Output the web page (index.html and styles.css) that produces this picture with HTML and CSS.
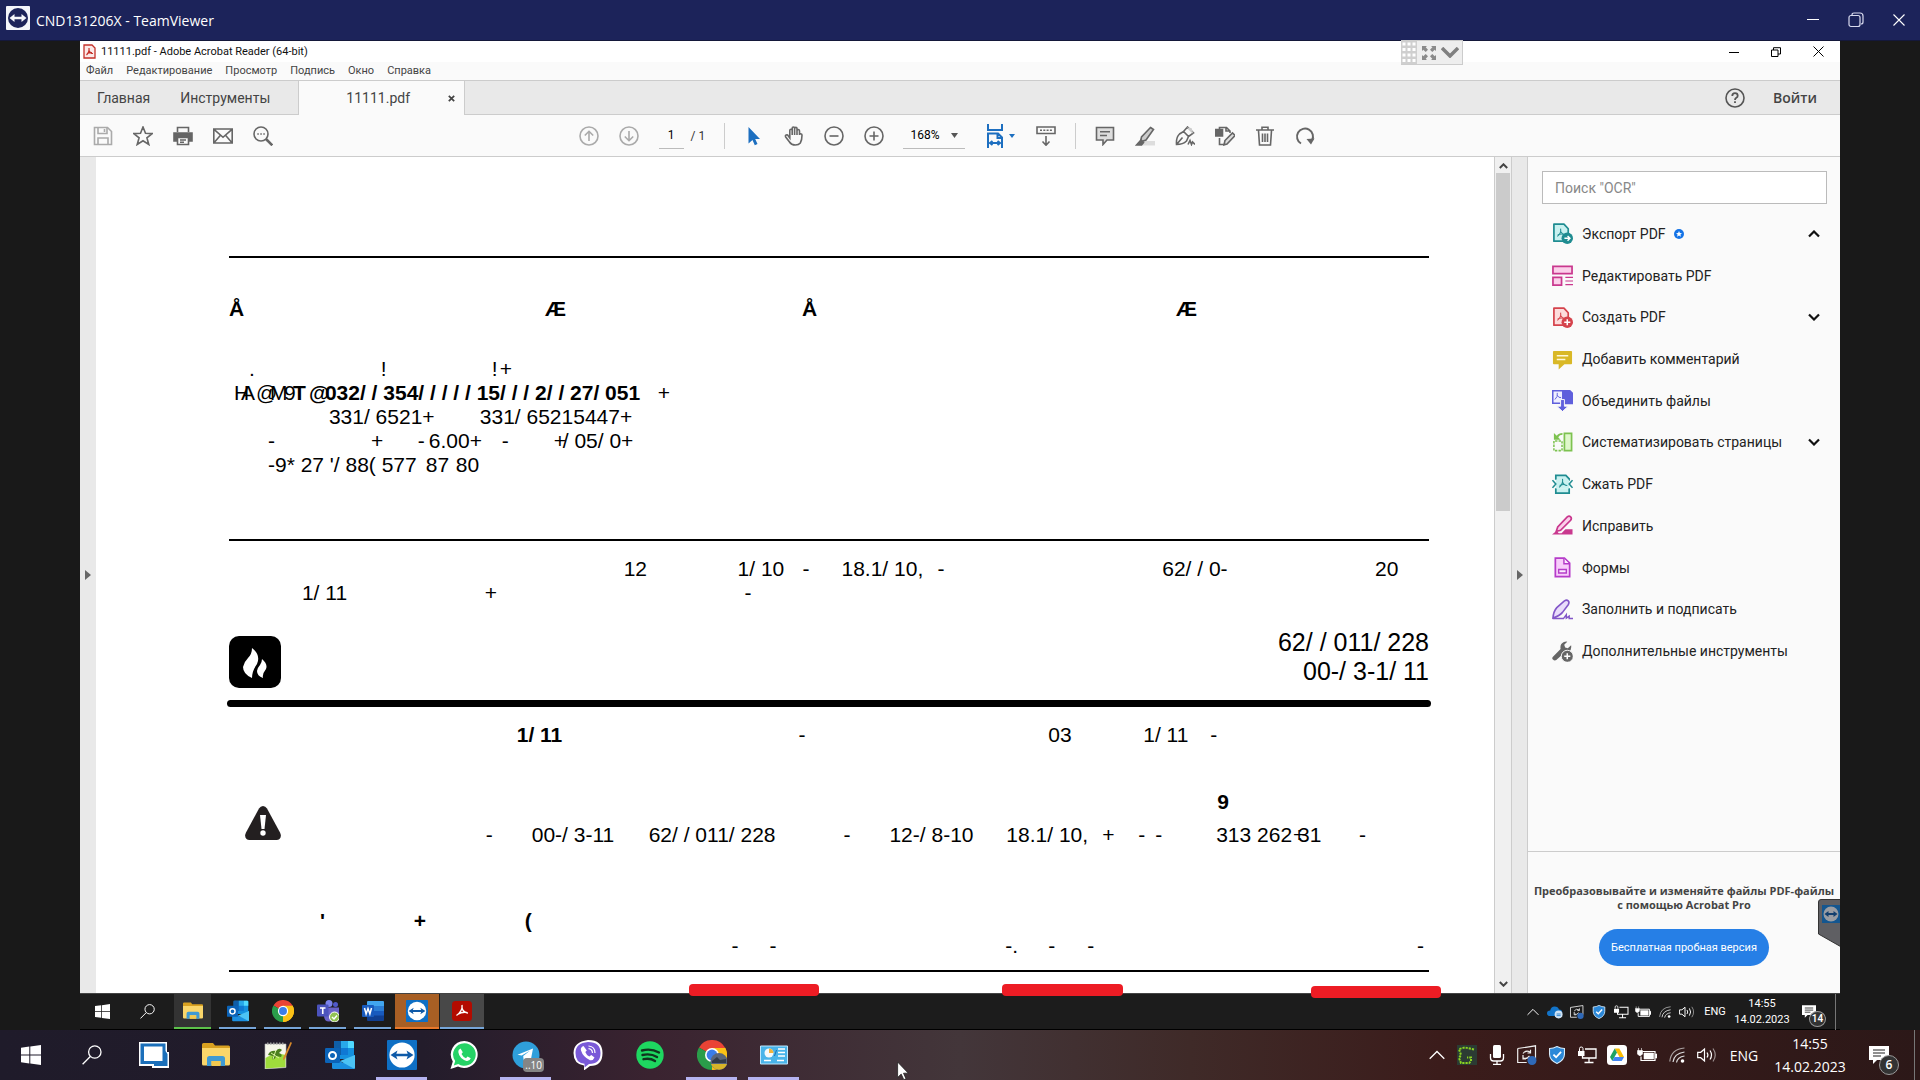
FILE: index.html
```html
<!DOCTYPE html>
<html lang="ru">
<head>
<meta charset="utf-8">
<meta name="viewport" content="width=device-width, initial-scale=1">
<title>CND131206X - TeamViewer</title>
<link rel="stylesheet" href="styles.css">
</head>
<body>

<!-- shared icons -->
<svg class="defs" aria-hidden="true">
  <symbol id="i-tv" viewBox="0 0 30 30">
    <rect width="30" height="30" rx="1" fill="#0e6fc4"/>
    <circle cx="15" cy="15" r="12.6" fill="#fff"/>
    <path d="M3.500 15l7-4.500-1.200 3.200h11.400L19.500 10.500l7 4.500-7 4.500 1.200-3.200H9.300l1.200 3.200z" fill="#0e5aa8"/>
  </symbol>
  <symbol id="i-win" viewBox="0 0 20 20">
    <path d="M0 2.800L8.300 1.600v7.900H0zM9.300 1.500L20 0v9.500H9.300zM0 10.500h8.300v7.900L0 17.200zM9.300 10.500H20V20L9.300 18.500z" fill="#fff"/>
  </symbol>
  <symbol id="i-find" viewBox="0 0 20 20">
    <g fill="none" stroke="#fff" stroke-width="1.300"><circle cx="12.800" cy="7" r="6.200"/><path d="M8.300 11.500L.6 19.300"/></g>
  </symbol>
  <symbol id="i-folder" viewBox="0 0 28 24">
    <path d="M0 1.500Q0 0 1.500 0H11l2 2.500h13.500Q28 2.500 28 4v4H0z" fill="#d9a120"/>
    <path d="M0 5h28v16q0 1.500-1.500 1.500h-25Q0 22.500 0 21z" fill="#fad66a"/>
    <path d="M5 23v-7.500Q5 13 7.500 13h13q2.500 0 2.500 2.500V23h-4.500v-5h-9v5z" fill="#3f9ad3"/>
    <path d="M9.500 18h9v5h-9z" fill="#f3c94f"/>
  </symbol>
  <symbol id="i-outlook" viewBox="0 0 30 28">
    <path d="M9 1.500Q9 0 10.500 0h17Q29 0 29 1.500V18H9z" fill="#1490df"/>
    <path d="M16 0h7v7h-7z" fill="#28a8ea"/><path d="M23 0h4.500Q29 0 29 1.500V7h-6z" fill="#50d9ff"/>
    <path d="M16 7h7v7h-7z" fill="#0f78d4"/><path d="M9 0h7v14H9z" fill="#0f5ea8"/>
    <path d="M7 15l11 7 12-8v12.500q0 1.500-1.500 1.500h-20Q7 28 7 26.500z" fill="#1a8fe0"/>
    <path d="M30 14v12.500q0 1-.8 1.300L15 20z" fill="#4cc3f5"/>
    <rect y="7" width="15" height="15" rx="1.200" fill="#0b63b8"/>
    <circle cx="7.500" cy="14.500" r="3.500" fill="none" stroke="#fff" stroke-width="2"/>
  </symbol>
  <symbol id="i-chrome" viewBox="0 0 30 30">
    <path d="M15 15L2 7.500A15 15 0 0 1 28 7.500z" fill="#ea4335"/>
    <path d="M15 15L28 7.500A15 15 0 0 1 15 30z" fill="#fbc116"/>
    <path d="M15 15v15A15 15 0 0 1 2 7.500z" fill="#2a9d4a"/>
    <path d="M15 8h13.200A15 15 0 0 1 15 30l6-11.500z" fill="#fbc116"/>
    <circle cx="15" cy="15" r="7" fill="#fff"/><circle cx="15" cy="15" r="5.400" fill="#3b7de9"/>
  </symbol>
  <symbol id="i-up" viewBox="0 0 16 9"><path d="M.7 8.300L8 1l7.300 7.300" fill="none" stroke="#fff" stroke-width="1.300"/></symbol>
  <symbol id="i-sync" viewBox="0 0 20 20">
    <path d="M.7 3.500L18.500.8v13M.7 3.500v14h9" fill="none" stroke="#eee" stroke-width="1.200"/>
    <path d="M6 8.500q3-4 7-1.500m.5-2.200V8h-3M6 10v4h3M6.500 13q3 1.500 6-2" fill="none" stroke="#eee" stroke-width="1.200"/>
    <circle cx="15" cy="15.500" r="4.500" fill="#2f69b8"/>
  </symbol>
  <symbol id="i-shield" viewBox="0 0 18 20">
    <path d="M9 .6q4 2.200 8.300 2.200V9q0 7-8.300 10.400Q.7 16 .7 9V2.800Q5 2.800 9 .6z" fill="#2b88d8" stroke="#d8ecfa" stroke-width="1.200"/>
    <path d="M5 9.500l3 3 5.500-6" fill="none" stroke="#fff" stroke-width="2"/>
  </symbol>
  <symbol id="i-net" viewBox="0 0 20 18">
    <path d="M8 3h11v9H5.500V9M12 12v4M7.500 16.500h9" fill="none" stroke="#fff" stroke-width="1.300"/>
    <path d="M1 5h6.500v5H1z" fill="#fff"/><path d="M2.500 5V2.500q0-1.500 1.700-1.500T6 2.500V5" fill="none" stroke="#fff"/>
  </symbol>
  <symbol id="i-bat" viewBox="0 0 20 14">
    <path d="M5.500 3.500H18v9H4v-4" fill="none" stroke="#fff" stroke-width="1.200"/>
    <path d="M7 5h9.500v6H7zM18.500 6H20v4h-1.500zM.5 2.500h5V6L4 7.500H2L.5 6zM1.500 0v3M4.500 0v3" fill="#fff" stroke="#fff" stroke-width=".6"/>
  </symbol>
  <symbol id="i-wifi" viewBox="0 0 16 16">
    <g fill="none" stroke="#ddd" stroke-width="1.200"><path d="M.8 14.500Q2 2 15.500 1" opacity=".7"/><path d="M4 15Q5 6.500 15.500 5"/><path d="M7.500 15.500Q8.500 10 15.500 9"/></g>
    <circle cx="13.500" cy="14" r="1.800" fill="#fff"/>
  </symbol>
  <symbol id="i-vol" viewBox="0 0 20 16">
    <g fill="none" stroke="#fff" stroke-width="1.200"><path d="M.7 5.300h3L7.500 2v12L3.700 10.700h-3z"/><path d="M10 5.500q1.800 2.500 0 5M13 3.500q3 4.500 0 9"/><path d="M16 1.500q4.500 6.500 0 13" opacity=".5"/></g>
  </symbol>
  <symbol id="i-note" viewBox="0 0 20 18">
    <path d="M0 0h20v14H8l-4 4v-4H0z" fill="#fff"/><path d="M4 4h12M4 7h12M4 10h8" stroke="#222" stroke-width="1.200"/>
  </symbol>
  <symbol id="i-page" viewBox="0 0 22 22">
    <path d="M2 1.200h10.500L17 6v13H2z" fill="var(--tint)" stroke="currentColor" stroke-width="1.800" stroke-linejoin="round"/>
    <path d="M9 6q1 5-3.500 8M9 9q2 3.500 5 3M6 12.500q3-1.500 6-.8" fill="none" stroke="currentColor" stroke-width="1.100"/>
  </symbol>
  <symbol id="i-chev" viewBox="0 0 12 8"><path d="M1 1.500l5 5 5-5" fill="none" stroke="#111" stroke-width="2.200"/></symbol>
</svg>

<header class="titlebar">
  <svg class="tv-logo" viewBox="0 0 24 24"><rect width="24" height="24" rx="1" fill="#f4f6fb"/><circle cx="12" cy="12" r="10" fill="#1c235a"/><path d="M3.500 12l5-4v2.700h7V8l5 4-5 4v-2.700h-7V16z" fill="#f4f6fb"/></svg>
  <h1>CND131206X - TeamViewer</h1>
  <div class="win-buttons">
    <button aria-label="Свернуть"><svg width="12" height="12"><path d="M0 5.500h12" stroke="#fff"/></svg></button>
    <button aria-label="Развернуть"><svg width="16" height="16" fill="none" stroke="#d8daee" stroke-width="1.200"><rect x="1" y="3.500" width="11" height="11" rx="2"/><path d="M4 3q0-2 2-2h6q3 0 3 3v6q0 2-2 2"/></svg></button>
    <button aria-label="Закрыть"><svg width="12" height="12"><path d="M.5.5l11 11M11.500.5l-11 11" stroke="#fff" stroke-width="1.100"/></svg></button>
  </div>
</header>

<main class="remote">
  <div class="tv-panel">
    <svg class="tv-grid" width="16" height="23" viewBox="0 0 16 23"><rect width="16" height="23" fill="#cfcfcf"/><path d="M3 0v23M8 0v23M13 0v23" stroke="#fff" stroke-width="3" stroke-dasharray="3 2.500" stroke-dashoffset="-1.500"/></svg>
    <svg width="14" height="14" fill="#8a8a8a"><path d="M0 0h5L3.700 1.300 6 3.700 3.700 6 1.300 3.700 0 5zM14 0v5l-1.300-1.300L10.300 6 8 3.700l2.400-2.400L9 0zM0 14V9l1.300 1.300L3.700 8 6 10.300l-2.300 2.400L5 14zM14 14H9l1.300-1.300L8 10.300 10.300 8l2.400 2.300L14 9z"/></svg>
    <svg width="18" height="11"><path d="M1 1l8 8 8-8" fill="none" stroke="#808080" stroke-width="3.500"/></svg>
  </div>

  <div class="app-title">
    <svg width="13" height="15" viewBox="0 0 13 15"><path d="M1 1h8l3 3v10H1z" fill="#fbe9e8" stroke="#c4312a" stroke-width="1.300"/><path d="M6 4q.6 4-2.500 7M6 6.500q1 3 4 3M4 9.500q2.500-1.300 5-.8" fill="none" stroke="#c4312a" stroke-width="1.200"/></svg>
    <span>11111.pdf - Adobe Acrobat Reader (64-bit)</span>
    <div class="win-buttons">
      <button aria-label="Свернуть окно"><svg width="10" height="10"><path d="M0 5.500h10" stroke="#000"/></svg></button>
      <button aria-label="Восстановить окно"><svg width="10" height="10" fill="none" stroke="#000"><path d="M.5 3h6.500v6.500H.5zM2.500 3V.7h7V7H7"/></svg></button>
      <button aria-label="Закрыть окно"><svg width="11" height="11"><path d="M.5.5l10 10M10.500.5l-10 10" stroke="#000"/></svg></button>
    </div>
  </div>

  <nav class="menu">
    <a href="#">Файл</a><a href="#">Редактирование</a><a href="#">Просмотр</a><a href="#">Подпись</a><a href="#">Окно</a><a href="#">Справка</a>
  </nav>

  <div class="tabs">
    <div class="tab-home">
      <button>Главная</button>
      <button>Инструменты</button>
    </div>
    <div class="tab active"><span>11111.pdf</span><button aria-label="Закрыть вкладку"><svg width="7" height="7"><path d="M.8.8l5.400 5.400M6.200.8L.8 6.200" stroke="#444" stroke-width="1.700"/></svg></button></div>
    <div class="tab-right">
      <button aria-label="Справка"><svg width="20" height="20" viewBox="0 0 20 20"><circle cx="10" cy="10" r="9" fill="none" stroke="#555" stroke-width="1.600"/><path d="M7.300 8q0-2.800 2.700-2.800T12.700 7.700q0 1.400-1.400 2.100-1.300.8-1.300 2.200M10 13.200v1.900" fill="none" stroke="#555" stroke-width="1.800"/></svg></button>
      <button class="signin">Войти</button>
    </div>
  </div>

  <div class="toolbar">
    <div class="tools">
      <button aria-label="Сохранить"><svg class="dim" viewBox="0 0 20 20"><path d="M1.500 1.500h13l4 4v13h-17z"/><path d="M5 1.500v6h9v-6M5 18.500V12h10v6.500"/><path d="M11.500 3v3"/></svg></button>
      <button aria-label="Избранное"><svg viewBox="0 0 20 20"><path d="M10 1l2.500 6.300 6.700.3-5.300 4.200 1.900 6.700L10 14.800l-5.800 3.700 1.900-6.700L.8 7.600l6.700-.3z"/></svg></button>
      <button aria-label="Печать"><svg viewBox="0 0 20 20"><path d="M1 7h18v8h-3v-3H4v3H1z" fill="#666"/><path d="M4.500 6V1.500h11V6M4.500 11.500h11v7h-11z" fill="#fafafa"/><path d="M7 14h6M7 16.300h4"/></svg></button>
      <button aria-label="Почта"><svg viewBox="0 0 20 20"><path d="M.8 3h18.400v14H.8zM1 3.300l9 8 9-8M1 16.700l6.500-7.500M19 16.700l-6.500-7.500"/></svg></button>
      <button aria-label="Найти"><svg viewBox="0 0 20 20"><circle cx="8" cy="8" r="7"/><path d="M13 13l6.300 6.300" stroke-width="2.600"/><path d="M4.300 8h1.500M7.300 8h1.500M10.300 8h1.500"/></svg></button>
    </div>

    <div class="tools">
      <button aria-label="Предыдущая страница"><svg class="dim" viewBox="0 0 20 20"><circle cx="10" cy="10" r="9"/><path d="M10 15V5.500M5.800 9.500L10 5.300l4.200 4.200"/></svg></button>
      <button aria-label="Следующая страница"><svg class="dim" viewBox="0 0 20 20"><circle cx="10" cy="10" r="9"/><path d="M10 5v9.500M5.800 10.500l4.200 4.200 4.200-4.200"/></svg></button>
      <input class="page-no" type="text" value="1" aria-label="Страница">
      <span class="page-total">/ 1</span>
      <span class="sep"></span>
      <button aria-label="Выделение"><svg viewBox="0 0 20 20"><path d="M4.500 1v16.500l4-3.500 2.300 5.200 2.700-1.200-2.300-5h4.800z" fill="#1d6fc0" stroke="none"/></svg></button>
      <button aria-label="Рука"><svg viewBox="0 0 20 20"><path d="M5.800 12V4.500q0-1.300 1.200-1.300t1.200 1.300V9 2.300Q8.200 1 9.400 1t1.200 1.300V9 2.600q0-1.200 1.200-1.200T13 2.600V9 4.700q0-1.200 1.200-1.200t1.300 1.200V9q0-1.300 1.300-1.200T18 9.300q0 5-1.700 7.700-1.500 2-5 2-4 0-5.800-3L1.700 11q-.8-1.500.5-2t2 .7z"/></svg></button>
      <button aria-label="Уменьшить"><svg viewBox="0 0 20 20"><circle cx="10" cy="10" r="9"/><path d="M5.500 10h9"/></svg></button>
      <button aria-label="Увеличить"><svg viewBox="0 0 20 20"><circle cx="10" cy="10" r="9"/><path d="M5.500 10h9M10 5.500v9"/></svg></button>
      <div class="zoom">
        <select aria-label="Масштаб"><option>168%</option></select>
        <svg width="7" height="5"><path d="M0 0h7L3.500 5z" fill="#555"/></svg>
      </div>
      <button class="fit" aria-label="По ширине"><svg class="blue" viewBox="0 0 20 24"><path d="M3 0v6h14V0M3 24V9.500h10l4 4V24M12.500 10v4H17M6 19h8M7.500 17L5 19l2.500 2M12.500 17l2.500 2-2.500 2"/></svg><svg width="6" height="4"><path d="M0 0h6L3 4z" fill="#1d6fc0" stroke="none"/></svg></button>
      <button aria-label="Прокрутка"><svg viewBox="0 0 20 20"><path d="M1 1h18v6.500H1z"/><path d="M4 4.300h12" stroke-dasharray="2 1.300"/><path d="M10 10v9M6.500 15.500l3.500 3.700 3.500-3.700"/></svg></button>
      <span class="sep"></span>
      <button aria-label="Комментарий"><svg viewBox="0 0 20 20"><path d="M1.500 1.500h17V14H12l-4 4.500V14H1.500z" fill="#ddd"/><path d="M5 5.800h10M5 9.500h7"/></svg></button>
      <button aria-label="Выделить цветом"><svg viewBox="0 0 20 20"><path d="M9 15h11v4.500H6z" fill="#ddd" stroke="none"/><path d="M15.500 1.500l3 2L11 14l-4.500 1.500-.8-.8L6.500 11z" fill="#ccc"/><path d="M6 14l-4.500 5h5l2-2.500z" fill="#666"/></svg></button>
      <button aria-label="Подписать"><svg viewBox="0 0 20 20"><path d="M1.500 18.500Q1 11 4.500 8l4-2.500 5 5-2 4.500Q8 18.500 1.500 18.500zl6-7M8.500 5.500L12.500 1l6 6-5 3.500"/><path d="M11.500 1.500l7 6.500-2-6z" fill="#ccc" stroke="none"/><path d="M13 18.500l2-4 1.500 4 1-2.500 2.500 2.500"/></svg></button>
      <button aria-label="Штамп"><svg viewBox="0 0 20 20"><path d="M.5 3.500h7V10h-7z" fill="#666"/><path d="M4.500 3V1.500h7L15 5v2M4.500 12v6.500h5M11 1.500V5h4"/><path d="M10 14.500L17.500 7 20 9.500 12 18l-3 .8z" fill="#ddd"/></svg></button>
      <button aria-label="Удалить"><svg viewBox="0 0 20 20"><path d="M1 4h18M7 4V1.200h6V4M3.500 4.500L4.500 19h11l1-14.500M7.500 7.500v8.500M10 7.500v8.500M12.500 7.500v8.500"/></svg></button>
      <button aria-label="Повернуть"><svg viewBox="0 0 20 20"><path d="M6 17.500A8 8 0 1 1 17 14.500" stroke-width="2"/><path d="M11.500 13l8-.5-3.500 6z" fill="#666" stroke="none"/></svg></button>
    </div>
  </div>

  <div class="workspace">
    <button class="rail" aria-label="Панель навигации"><svg width="6" height="10"><path d="M0 0l6 5-6 5z" fill="#666"/></svg></button>

    <article class="page">
      <hr>
      <p class="line bold l-letters"><span>Å</span><span>Æ</span><span>Å</span><span>Æ</span></p>
      <div class="address">
        <p class="line indent l-marks"><span>.</span><span>!</span><span>!</span><span>+</span></p>
        <p class="line indent l-account"><span>H</span><span>A</span><span>@</span><span>M</span><span>9</span><b>T</b><b>@</b><b>032/ / 354/ / / / / 15/ / / 2/ / 27/ 051</b><span>+</span></p>
        <p class="line indent l-phones"><span>331/ 6521+</span><span>331/ 65215447+</span></p>
        <p class="line indent l-hours"><span>-</span><span>+</span><span>-</span><span>6.00+</span><span>-</span><span>+</span><span>/ 05/ 0+</span></p>
        <p class="line indent l-fax"><span>-9* 27 '/ 88( 577</span><span>87</span><span>80</span></p>
      </div>
      <hr>
      <div class="intro">
        <p class="line indent l-period"><span>12</span><span>1/ 10</span><span>-</span><span>18.1/ 10,</span><span>-</span><span>62/ / 0-</span><span>20</span></p>
        <p class="line indent l-sum"><span>1/ 11</span><span>+</span><span>-</span></p>
      </div>
      <div class="bill-head">
        <svg width="52" height="52" viewBox="0 0 52 52"><rect width="52" height="52" rx="10"/><path d="M23 12q9 7 5 16-5 7-5 14-9-4-9-11 1-5 5-9 4-4 4-10zM33 23q6 5 4 10-4 5-3 9-6-2-6-7 1-4 3-6 2-3 2-6z" fill="#fff"/></svg>
        <p>62/ / 011/ 228<br>00-/ 3-1/ 11</p>
      </div>
      <hr class="thick">
      <p class="line indent l-total"><b>1/ 11</b><span>-</span><span>03</span><span>1/ 11</span><span>-</span></p>
      <div class="notice">
        <svg width="36" height="34" viewBox="0 0 36 34"><path d="M18 0q2.500 0 4 2.500l13 24q2 4-.5 6.500-1 1-3 1h-27q-2 0-3-1Q-1 30.500 1 26.500l13-24Q15.500 0 18 0z" fill="#231f20"/><path d="M15 9h6l-1.500 14h-3z" fill="#fff"/><circle cx="18" cy="27" r="2.700" fill="#fff"/></svg>
        <div>
          <p class="line indent l-nine bold"><span>9</span></p>
          <p class="line indent l-notice"><span>-</span><span>00-/ 3-11</span><span>62/ / 011/ 228</span><span>-</span><span>12-/ 8-10</span><span>18.1/ 10,</span><span>+</span><span>-</span><span>-</span><span>313 262</span><span>+</span><span>31</span><span>-</span></p>
        </div>
      </div>
      <p class="line indent bold l-formula"><span>'</span><span>+</span><span>(</span></p>
      <p class="line indent l-dashes"><span>-</span><span>-</span><span>-.</span><span>-</span><span>-</span><span>-</span></p>
      <hr class="last">
    </article>

    <div class="scrollbar">
      <svg width="9" height="6"><path d="M.8 5l3.700-3.700L8.200 5" fill="none" stroke="#444" stroke-width="2"/></svg>
      <div class="thumb"></div>
      <svg width="9" height="6"><path d="M.8 1l3.700 3.700L8.200 1" fill="none" stroke="#444" stroke-width="2"/></svg>
    </div>
    <button class="rail right" aria-label="Панель инструментов"><svg width="6" height="10"><path d="M0 0l6 5-6 5z" fill="#666"/></svg></button>

    <aside class="pane">
      <input type="text" placeholder='Поиск "OCR"' aria-label="Поиск инструментов">
      <ul>
        <li><a href="#"><svg class="teal" viewBox="0 0 22 22"><use href="#i-page"/><circle cx="16" cy="16" r="6" fill="currentColor"/><path d="M13 16h5.500M16.300 13.500l2.500 2.500-2.500 2.500" fill="none" stroke="#fff" stroke-width="1.500"/></svg>Экспорт PDF<svg class="badge" viewBox="0 0 10 10"><circle cx="5" cy="5" r="5" fill="#1473e6"/><path d="M5 2l.9 2 2.100.2-1.600 1.400.5 2.100L5 6.600 3.100 7.700l.5-2.100L2 4.200 4.100 4z" fill="#fff"/></svg><svg class="chev flip"><use href="#i-chev"/></svg></a></li>
        <li><a href="#"><svg class="pink" viewBox="0 0 22 22"><path d="M1 1.500h20V9H1zM1 13h9v8H1z" fill="var(--tint)" stroke="currentColor" stroke-width="1.800"/><path d="M14 13h8M14 16.800h8M14 20.600h8" stroke="currentColor" stroke-width="1.200"/></svg>Редактировать PDF</a></li>
        <li><a href="#"><svg class="red" viewBox="0 0 22 22"><use href="#i-page"/><circle cx="16" cy="16" r="6" fill="currentColor"/><path d="M12.800 16h6.400M16 12.800v6.400" stroke="#fff" stroke-width="1.600"/></svg>Создать PDF<svg class="chev"><use href="#i-chev"/></svg></a></li>
        <li><a href="#"><svg class="gold" viewBox="0 0 22 22"><path d="M1 3q0-1 1-1h18q1 0 1 1v12q0 1-1 1h-7l-6 5.500V16H2q-1 0-1-1z" fill="currentColor"/><path d="M5 7h12M5 11h9" stroke="#fff8d8" stroke-width="1.500"/></svg>Добавить комментарий</a></li>
        <li><a href="#"><svg class="violet" viewBox="0 0 22 22"><path d="M11 0h8l4 4v11H11z" fill="currentColor"/><path d="M.8.8h10.500v13H.8z" fill="#eef" stroke="currentColor" stroke-width="1.600"/><path d="M5.500 3q1 4-2.500 7M5.500 5.500q1.500 3 4 2.500" fill="none" stroke="currentColor"/><path d="M9 10h4v7h4l-6 5.500L5 17h4z" fill="currentColor" stroke="#fafafa"/></svg>Объединить файлы</a></li>
        <li><a href="#"><svg class="green" viewBox="0 0 22 22"><path d="M13 1.500h7.500v18H13z" fill="var(--tint)" stroke="currentColor" stroke-width="1.800"/><path d="M2 9.500v10h8.500V9.500z" fill="none" stroke="currentColor" stroke-width="1.600" stroke-dasharray="2.500 1.200"/><path d="M2 1v7h7L6.500 5.500Q8 3 11 3V1Q7 1 5 4z" fill="currentColor"/></svg>Систематизировать страницы<svg class="chev"><use href="#i-chev"/></svg></a></li>
        <li><a href="#"><svg class="teal" viewBox="0 0 22 22"><path d="M4 6V1.500h10.500L18 5v2M4 15v5h14v-5" fill="var(--tint)" stroke="currentColor" stroke-width="1.800"/><path d="M4 6h14v9H4z" fill="var(--tint)"/><path d="M.5 6.500L4 10.500.500 14.500M21.500 6.500L18 10.500l3.500 4" fill="none" stroke="currentColor" stroke-width="1.600"/><path d="M11 5q1 5-3.500 9M11 8q1 4 5 4M8 12q3-1.500 6-.8" fill="none" stroke="currentColor" stroke-width="1.100"/></svg>Сжать PDF</a></li>
        <li><a href="#"><svg class="pink" viewBox="0 0 22 22"><path d="M16 2q2-1.500 3.500 0t0 3.500L9 16l-4.500 1L6 12.500z" fill="var(--tint)" stroke="currentColor" stroke-width="1.800"/><path d="M10 19l4-4h7.500v5.500H0l5-4 2 2.500z" fill="currentColor"/></svg>Исправить</a></li>
        <li><a href="#"><svg class="purple" viewBox="0 0 22 22"><path d="M3.500 1.200H13l5.500 5.300v14h-15z" fill="var(--tint)" stroke="currentColor" stroke-width="1.800"/><path d="M12.500 1.500V7h5.500M7 13h8v3.800H7z" fill="#fbeefe" stroke="currentColor" stroke-width="1.500"/></svg>Формы</a></li>
        <li><a href="#"><svg class="lilac" viewBox="0 0 22 22"><path d="M1 20q.5-7 4-11l8-7q2.500-1.500 4 0t0 4L11 14q-3 3.500-10 6z" fill="var(--tint)" stroke="currentColor" stroke-width="1.700"/><path d="M1 20.500h11l3-4v3.500l3-2v2.500h4" fill="none" stroke="currentColor" stroke-width="1.500"/></svg>Заполнить и подписать</a></li>
        <li><a href="#"><svg class="gray" viewBox="0 0 22 22"><path d="M1 16.500l8-8Q8 3 12.500 1q2-.8 3.500-.3L12.800 4l1 2.800 2.800.8L20 4.500q.8 4-2 6.500-2.500 2-5 1.300L4.500 20Q2.500 21 1 19.500t0-3z" fill="currentColor"/><circle cx="16" cy="16" r="6.300" fill="currentColor" stroke="#fafafa"/><path d="M12.800 16h6.400M16 12.800v6.400" stroke="#fff" stroke-width="1.600"/></svg>Дополнительные инструменты</a></li>
      </ul>
      <div class="promo">
        <p>Преобразовывайте и изменяйте файлы PDF-файлы с помощью Acrobat Pro</p>
        <button>Бесплатная пробная версия</button>
      </div>
      <svg class="side-tab" width="22" height="48" viewBox="0 0 22 48"><path d="M3 .5h20v47.300L.5 35V3q0-2.500 2.500-2.500z" fill="#5f5f63" stroke="#333"/><rect x="4" y="6" width="18" height="18" fill="#14568f"/><circle cx="13" cy="15" r="7.500" fill="#9a9da3"/><path d="M6.500 15l4-3v2h5v-2l4 3-4 3v-2h-5v2z" fill="#14406f"/></svg>
    </aside>
  </div>

  <footer class="taskbar inner">
    <div class="apps">
      <button aria-label="Пуск"><svg class="s15"><use href="#i-win"/></svg></button>
      <button aria-label="Поиск"><svg class="s15"><use href="#i-find"/></svg></button>
      <button class="run files" aria-label="Проводник"><svg class="s20"><use href="#i-folder"/></svg></button>
      <button class="run" aria-label="Outlook"><svg class="s22"><use href="#i-outlook"/></svg></button>
      <button class="run" aria-label="Chrome"><svg class="s22"><use href="#i-chrome"/></svg></button>
      <button class="run" aria-label="Teams"><svg class="s22" viewBox="0 0 22 22"><circle cx="12" cy="3.500" r="3.500" fill="#7b83eb"/><circle cx="18.500" cy="4.500" r="2.500" fill="#5059c9"/><path d="M7 7.500h15v7q0 4-4 4h-1q-1.500 3-5 3-5 0-5-6z" fill="#6a63c8"/><rect y="4.500" width="11.500" height="12" rx="1" fill="#4b53bc"/><path d="M3 8h5.500M5.750 8v6" stroke="#fff" stroke-width="1.600"/><circle cx="17.500" cy="17" r="5" fill="#92c353" stroke="#fff"/><path d="M15 17l2 2 3-3.500" fill="none" stroke="#fff" stroke-width="1.500"/></svg></button>
      <button class="run" aria-label="Word"><svg class="s22" viewBox="0 0 22 22"><path d="M5 2q0-1 1-1h15q1 0 1 1v5H5z" fill="#41a5ee"/><path d="M5 6h17v5H5z" fill="#2b7cd3"/><path d="M5 11h17v5H5z" fill="#185abd"/><path d="M5 15.500h17V20q0 1-1 1H6q-1 0-1-1z" fill="#103f91"/><rect y="5" width="12" height="12" rx="1" fill="#185abd"/><path d="M2.500 8l1.600 6L6 8.500 7.900 14l1.600-6" fill="none" stroke="#fff" stroke-width="1.500"/></svg></button>
      <button class="run alert" aria-label="TeamViewer"><svg class="s22"><use href="#i-tv"/></svg></button>
      <button class="run current" aria-label="Acrobat"><svg class="s20" viewBox="0 0 20 20"><rect width="20" height="20" rx="3.500" fill="#b30b00"/><path d="M10 4q1 5.500-5.500 10.500M10 7q1 4.500 6 5M5.500 13.500q4.500-2.800 9.500-2" fill="none" stroke="#fff" stroke-width="1.400"/></svg></button>
    </div>
    <div class="tray">
      <svg class="t12"><use href="#i-up"/></svg>
      <svg class="t15" viewBox="0 0 20 16"><path d="M4 13Q0 13 0 9.500T4 6Q5 1 9.500 1T15 5q4 0 4 4t-4 4z" fill="#1274c9"/><circle cx="14.500" cy="11" r="5" fill="#cfe3f5"/><path d="M12 10.500h5M12 12.500h5" stroke="#1274c9"/></svg>
      <svg class="t15"><use href="#i-sync"/></svg>
      <svg class="t15"><use href="#i-shield"/></svg>
      <svg class="t15"><use href="#i-net"/></svg>
      <svg class="t15"><use href="#i-bat"/></svg>
      <svg class="t12"><use href="#i-wifi"/></svg>
      <svg class="t15"><use href="#i-vol"/></svg>
      <span class="lang">ENG</span>
      <time>14:55<br>14.02.2023</time>
      <button class="notify" aria-label="Уведомления"><svg><use href="#i-note"/></svg><span>14</span></button>
    </div>
  </footer>

  <div class="marks"><i></i><i></i><i></i></div>
</main>

<footer class="taskbar outer">
  <div class="apps">
    <button aria-label="Пуск"><svg class="s20"><use href="#i-win"/></svg></button>
    <button aria-label="Поиск"><svg class="s20"><use href="#i-find"/></svg></button>
    <button aria-label="Рабочий стол"><svg class="s30" viewBox="0 0 30 26"><path d="M0 0h28v10h2v16H13v-2H0z" fill="#fff"/><path d="M1.500 1.500h25V9L28.500 12v12H15v-2H1.500z" fill="#1b6fba"/><path d="M5 4.500h18.500V19H5z" fill="#fff"/></svg></button>
    <button aria-label="Проводник"><svg class="s28"><use href="#i-folder"/></svg></button>
    <button aria-label="Notepad++"><svg class="s28" viewBox="0 0 28 28"><path d="M1 3h21v23.500L1 28z" fill="#f6f6ea" stroke="#bbb" stroke-width=".6"/><path d="M1.500 17q10-6 20-3v12L1.500 27.500z" fill="#9fdc3c"/><path d="M3 2.500h17" stroke="#999" stroke-width="2" stroke-dasharray="1.500 1.500"/><path d="M4 14q2-5 8-4 3-4 6-1l-3 3q4 1 2 4l-5-1q-1 4-4 3l1-3z" fill="#4b7f1e"/><path d="M7 12l8 5M12 9l-3 9" stroke="#d8f0a0"/><path d="M26.500 1l1.500.7-7 16-2 1.800.300-2.700z" fill="#d8892a"/></svg></button>
    <button aria-label="Outlook"><svg class="s30"><use href="#i-outlook"/></svg></button>
    <button class="run" aria-label="TeamViewer"><svg class="s30"><use href="#i-tv"/></svg></button>
    <button aria-label="WhatsApp"><svg class="s28" viewBox="0 0 28 28"><path d="M14.500 0A13.500 13.500 0 1 1 8 25.500L.5 28l2.300-7.500A13.500 13.500 0 0 1 14.500 0z" fill="#fff"/><path d="M14.500 2.200A11.300 11.300 0 1 1 8.300 23l-4.500 1.500 1.400-4.500A11.300 11.300 0 0 1 14.500 2.200z" fill="#25d366"/><path d="M10.500 7.500q-2.500 1-2.200 3.500 1 6.500 8.200 9 3 .5 4.300-2.700L17.500 15.500l-1.500 1.800q-3-1.300-4.500-4.300l1.300-1.700z" fill="#fff"/></svg></button>
    <button class="run" aria-label="Telegram"><svg class="s28" viewBox="0 0 28 28"><circle cx="14" cy="14" r="13.500" fill="#2f9fdb"/><path d="M5.500 13.700L21 7.500l-2.500 13-4.500-3.300-2.300 2.300-.5-4.500 7-5.500-8.500 5z" fill="#fff"/></svg><span class="count">..10</span></button>
    <button aria-label="Viber"><svg class="s30" viewBox="0 0 30 30"><path d="M15 0Q29.500 0 29.500 13T17 26l-6 4.500V25.500Q.5 24 .5 13T15 0z" fill="#fff"/><path d="M15 2Q27.500 2 27.500 13T16 24l-4.500 3.500V23.700Q2.500 23 2.500 13T15 2z" fill="#7a5ad8"/><path d="M10.500 6q-3.500 1.500-2.500 4.500 2 6.500 9 9.700 3 .8 4.500-2.700L18.300 15l-2 1.500q-3-1.500-4-4.500l1.500-1.500z" fill="#fff"/><path d="M15.500 6q6.500.5 6.500 7M15.500 8.700q3.700.3 4 4.300" fill="none" stroke="#fff" stroke-width="1.200"/></svg></button>
    <button aria-label="Spotify"><svg class="s28" viewBox="0 0 28 28"><circle cx="14" cy="14" r="13.700" fill="#1ed760"/><path d="M6 9.500q9-2.500 17 2M6.500 14q8-2 14.500 2M7.500 18.200q6.500-1.500 11.500 1.800" fill="none" stroke="#10351f" stroke-width="2.400" stroke-linecap="round"/></svg></button>
    <button class="run" aria-label="Chrome"><svg class="s30" viewBox="0 0 30 30"><use href="#i-chrome"/><circle cx="22" cy="21.500" r="8.500" fill="#59657a"/><path d="M14 24a8.500 8.500 0 0 0 16 0z" fill="#d8b428"/><path d="M15 21l5-4 3 3 6-1v4H15z" fill="#333b48"/></svg></button>
    <button class="run" aria-label="Панель управления"><svg class="s28" viewBox="0 0 28 20"><path d="M.5 1h27v18H.5z" fill="#49b4ea" stroke="#bfe6fb"/><circle cx="9" cy="8" r="4.500" fill="#f5f9fb"/><path d="M9 8V3.500A4.500 4.500 0 0 1 13.500 8z" fill="#f2b33c"/><path d="M18 4h7M18 7.500h7M18 11h7M4 15.500h7M17 15.500h7" stroke="#fff" stroke-width="1.400"/><path d="M14.500 11l2-6" stroke="#1b6fba"/></svg></button>
  </div>
  <div class="tray">
    <svg class="t16"><use href="#i-up"/></svg>
    <svg class="t20" viewBox="0 0 20 20"><rect width="20" height="20" fill="#2b3b33"/><path d="M17 4.500L8 2.500 2 4l2 6-2 3 2 5h8l2-1.500v-4h-4" fill="none" stroke="#8bd421" stroke-width="2" stroke-dasharray="2.200 1"/></svg>
    <svg class="t20" viewBox="0 0 20 20"><rect x="6" width="8" height="13" rx="1.500" fill="#fff"/><path d="M3.500 9v4q0 3 3 3h7q3 0 3-3V9M10 16v3.300M6 19.300h8" fill="none" stroke="#fff" stroke-width="1.300"/></svg>
    <svg class="t20"><use href="#i-sync"/></svg>
    <svg class="t18"><use href="#i-shield"/></svg>
    <svg class="t18"><use href="#i-net"/></svg>
    <svg class="t20" viewBox="0 0 20 20"><rect width="20" height="20" rx="3.500" fill="#fff"/><path d="M7.700 3.500h4.600L17 12h-4.500z" fill="#fbbc04"/><path d="M7.700 3.500L3 12l2.300 4L10 7.500z" fill="#1ea362"/><path d="M7.500 12H17l-2.300 4H5.300z" fill="#4285f4"/></svg>
    <svg class="t20"><use href="#i-bat"/></svg>
    <svg class="t16"><use href="#i-wifi"/></svg>
    <svg class="t20"><use href="#i-vol"/></svg>
    <span class="lang">ENG</span>
    <time>14:55<br>14.02.2023</time>
    <button class="notify" aria-label="Уведомления"><svg><use href="#i-note"/></svg><span>6</span></button>
  </div>
</footer>

<svg class="pointer" width="12" height="19" viewBox="0 0 12 19"><path d="M.6 1v15.500l3.600-3.400 2.600 5.600 2.200-1L6.500 12.200h4.800z" fill="#fff" stroke="#222" stroke-width=".8"/></svg>

</body>
</html>
```
FILE: styles.css
```css
* {
  box-sizing: border-box;
}

body {
  margin: 0;
  height: 100vh;
  display: flex;
  flex-direction: column;
  overflow: hidden;
  background: #191919;
  font-family: "Open Sans", "Noto Sans", sans-serif;
  color: #222;
}

button {
  border: 0;
  padding: 0;
  background: none;
  font: inherit;
  color: inherit;
  display: flex;
  align-items: center;
  justify-content: center;
}

a {
  color: inherit;
  text-decoration: none;
}

.defs {
  display: none;
}

/* TeamViewer window title */
.titlebar {
  display: flex;
  align-items: center;
  height: 41px;
  flex: none;
  padding-left: 6px;
  background: #1c235a;
  border-bottom: 1px solid #14183a;
  color: #fff;
}

.tv-logo {
  width: 24px;
  height: 24px;
  margin-bottom: 4px;
}

.titlebar h1 {
  margin: 0 0 0 6px;
  font-size: 14px;
  font-weight: normal;
}

.win-buttons {
  display: flex;
  margin-left: auto;
}

.titlebar .win-buttons button {
  width: 43px;
  height: 40px;
}

/* remote screen */
.remote {
  position: relative;
  flex: 1;
  min-height: 0;
  display: flex;
  flex-direction: column;
  margin: 0 80px;
  background: #fafafa;
  font-family: Roboto, "Open Sans", sans-serif;
}

.tv-panel {
  position: absolute;
  top: -1px;
  right: 377px;
  display: flex;
  align-items: center;
  gap: 5px;
  padding-right: 3px;
  background: #eee;
  border: 1px solid #ccc;
  border-left: 0;
}

.app-title {
  display: flex;
  align-items: center;
  height: 21px;
  flex: none;
  padding: 0 1px 0 3px;
  background: #fff;
  font-size: 11px;
  color: #111;
}

.app-title span {
  margin-left: 5px;
}

.app-title .win-buttons button {
  width: 42px;
  height: 21px;
}

.menu {
  display: flex;
  gap: 13px;
  height: 18px;
  flex: none;
  padding-left: 6px;
  font-size: 11px;
  line-height: 18px;
  color: #444;
}

.tabs {
  display: flex;
  height: 35px;
  flex: none;
  background: #e9e9e9;
  border-top: 1px solid #ccc;
  font-size: 14px;
  color: #444;
}

.tab-home {
  display: flex;
  gap: 30px;
  width: 219px;
  padding-left: 17px;
  border-right: 1px solid #ccc;
  border-bottom: 1px solid #ccc;
}

.tab {
  display: flex;
  align-items: center;
  justify-content: flex-end;
  gap: 38px;
  width: 166px;
  padding-right: 9px;
  background: #fafafa;
  border-right: 1px solid #ccc;
}

.tab-right {
  display: flex;
  flex: 1;
  justify-content: flex-end;
  gap: 28px;
  padding-right: 23px;
  border-bottom: 1px solid #ccc;
}

.signin {
  font-family: "Open Sans", sans-serif;
  font-weight: 600;
}

.toolbar {
  display: grid;
  grid-template-columns: 1fr auto 1fr;
  height: 42px;
  flex: none;
  padding: 0 30px 0 3px;
  border-bottom: 1px solid #ccc;
  font-size: 12px;
  color: #333;
}

.tools {
  display: flex;
  align-items: center;
}

.tools button {
  width: 40px;
  height: 40px;
}

.tools button svg {
  fill: none;
  stroke: #666;
  stroke-width: 1.6;
}

.tools button > svg:first-child {
  width: 20px;
  height: 20px;
}

.tools button svg.dim {
  stroke: #aaa;
}

.tools button svg.blue {
  height: 24px;
  stroke: #1d6fc0;
  stroke-width: 2;
}

.tools .fit {
  width: 52px;
  gap: 4px;
}

.page-no {
  width: 25px;
  height: 26px;
  margin: 0 7px 0 10px;
  padding: 0;
  border: 0;
  border-bottom: 1px solid #bbb;
  background: none;
  font: inherit;
  text-align: center;
}

.sep {
  width: 1px;
  height: 26px;
  margin: 0 9px;
  background: #ccc;
}

.page-total {
  width: 24px;
}

.zoom {
  display: flex;
  align-items: center;
  width: 62px;
  height: 26px;
  margin: 0 9px;
  border-bottom: 1px solid #bbb;
}

.zoom select {
  appearance: none;
  flex: 1;
  min-width: 0;
  padding: 0 0 0 8px;
  border: 0;
  background: none;
  font: inherit;
}

.zoom svg {
  margin-right: 7px;
}

/* document, scrollbar and tool pane */
.workspace {
  display: flex;
  flex: 1;
  min-height: 0;
}

.rail {
  width: 16px;
  flex: none;
  background: #e9e9e9;
}

.rail.right {
  width: 17px;
  border-left: 1px solid #ccc;
  border-right: 1px solid #ccc;
}

.page {
  flex: 1;
  min-width: 0;
  overflow: hidden;
  padding: 99px 65px 0 133px;
  background: #fff;
  font: 21px/24px "Liberation Sans", Arial, sans-serif;
  color: #000;
}

.page p {
  margin: 0;
}

.page hr {
  margin: 0;
  border: 0;
  height: 2px;
  background: #000;
}

.page hr.thick {
  height: 7px;
  margin: 12px -2px 16px;
  border-radius: 4px;
}

.page hr.last {
  margin-top: 12px;
}

/* one line of the page, runs start at the column edges */
.line {
  display: grid;
  white-space: nowrap;
}

.line > * {
  min-width: 0;
}

.indent {
  padding-left: 1px;
}

.indent > :first-child {
  grid-column-start: 2;
}

.bold {
  font-weight: bold;
}

.l-letters { grid-template-columns: 316fr 257fr 374fr 253fr; padding: 39px 0 36px; }
.l-marks   { grid-template-columns: 19fr 132fr 111fr 8fr 930fr; }
.l-account { grid-template-columns: 4fr 7fr 15fr 14fr 14fr 9fr 16fr 16fr 333fr 772fr; }
.l-phones  { grid-template-columns: 99fr 151fr 950fr; }
.l-hours   { grid-template-columns: 38fr 103fr 47fr 11fr 73fr 52fr 9fr 867fr; }
.l-fax     { grid-template-columns: 38fr 158fr 30fr 974fr; }
.l-period  { grid-template-columns: 394fr 114fr 65fr 39fr 96fr 225fr 213fr 54fr; }
.l-sum     { grid-template-columns: 72fr 183fr 260fr 685fr; }
.l-total   { grid-template-columns: 287fr 282fr 250fr 95fr 67fr 219fr; }
.l-nine    { grid-template-columns: 988fr 212fr; }
.l-notice  { grid-template-columns: 256fr 46fr 117fr 195fr 46fr 117fr 96fr 36fr 17fr 61fr 77fr 5fr 61fr 70fr; }
.l-formula { grid-template-columns: 90fr 94fr 111fr 905fr; }
.l-dashes  { grid-template-columns: 502fr 38fr 236fr 43fr 39fr 330fr 12fr; }

.address {
  padding-bottom: 62px;
}

.intro {
  padding: 16px 0 23px;
}

.bill-head {
  display: flex;
  justify-content: space-between;
  align-items: flex-end;
  height: 60px;
}

.bill-head p {
  align-self: flex-start;
  font-size: 25px;
  line-height: 29px;
  text-align: right;
}

.notice {
  display: grid;
  padding: 43px 0 62px;
}

.notice > * {
  grid-area: 1 / 1;
}

.notice > svg {
  align-self: end;
  margin: 0 0 7px 16px;
}

.l-nine {
  padding-bottom: 9px;
}

.l-formula {
  padding-bottom: 1px;
}

.scrollbar {
  display: flex;
  flex-direction: column;
  align-items: center;
  width: 17px;
  flex: none;
  padding: 6px 1px;
  background: #f0f0f0;
  border-left: 1px solid #ccc;
}

.scrollbar .thumb {
  width: 14px;
  height: 41%;
  margin: 4px 0 auto;
  background: #cbcbcb;
}

.pane {
  position: relative;
  display: flex;
  flex-direction: column;
  width: 312px;
  flex: none;
  background: #fafafa;
}

.pane input {
  height: 33px;
  margin: 14px 13px 9px 14px;
  padding: 0 12px;
  border: 1px solid #bbb;
  background: #fff;
  font: inherit;
  font-size: 14px;
}

.pane input::placeholder {
  color: #888;
}

.pane ul {
  display: grid;
  grid-auto-rows: 1fr;
  min-height: 459px;
  margin: 0;
  padding: 0 20px 0 24px;
  list-style: none;
  font-size: 14px;
  color: #222;
}

.pane li a {
  display: flex;
  align-items: center;
  height: 100%;
}

.pane li svg:first-child {
  width: 21px;
  height: 21px;
  margin-right: 9px;
}

.pane li .badge {
  width: 10px;
  height: 10px;
  margin-left: 8px;
}

.pane li .chev {
  width: 12px;
  height: 8px;
  margin-left: auto;
}

.flip {
  transform: scaleY(-1);
}

.teal   { color: #1f8c91; --tint: #c9f1f0; }
.pink   { color: #c9388e; --tint: #fbd0ea; }
.red    { color: #d5434c; --tint: #fddcdc; }
.gold   { color: #d9b826; }
.violet { color: #5f5fdc; }
.green  { color: #7dc250; --tint: #dff7cb; }
.purple { color: #b53bc9; --tint: #f8cdfb; }
.lilac  { color: #8256c8; --tint: #e9dcfb; }
.gray   { color: #666; }

.promo {
  display: flex;
  flex-direction: column;
  align-items: center;
  margin-top: auto;
  padding: 32px 4px 27px;
  border-top: 1px solid #ccc;
  font-size: 11px;
  line-height: 14px;
  text-align: center;
}

.promo p {
  margin: 0 0 17px;
  font-family: "Open Sans", sans-serif;
  font-weight: bold;
  color: #444;
}

.promo button {
  height: 37px;
  padding: 0 12px;
  border-radius: 19px;
  background: #267fe6;
  color: #fff;
}

.side-tab {
  position: absolute;
  right: 0;
  bottom: 46px;
}

/* red pen strokes over the page and the task bar */
.marks i {
  position: absolute;
  bottom: 34px;
  left: 609px;
  width: 130px;
  height: 12px;
  border-radius: 4px;
  background: #ed1c24;
}

.marks i:nth-child(2) {
  left: 922px;
  width: 121px;
}

.marks i:nth-child(3) {
  left: 1231px;
  bottom: 32px;
}

/* task bars */
.taskbar {
  display: flex;
  justify-content: space-between;
  flex: none;
  color: #fff;
}

.apps,
.tray {
  display: flex;
  align-items: center;
}

.apps button {
  position: relative;
  height: 100%;
}

.tray > svg {
  flex: none;
}

.inner {
  height: 37px;
  background: #1c1c1c;
  border-top: 1px solid #444;
  border-bottom: 1px solid #000;
  font-size: 11px;
}

.inner .apps button {
  width: 37px;
  margin: 0 4px;
}

.inner .run {
  border-bottom: 2px solid #76a5d8;
}

.inner .files {
  background: #333;
  border-color: #5cc24a;
}

.inner .apps .alert,
.inner .apps .current {
  width: 44px;
  margin: 0 1px 0 0;
}

.inner .alert {
  background: #a85f24;
  border-color: #e8782a;
}

.inner .current {
  background: #484848;
}

.outer {
  height: 50px;
  background: linear-gradient(90deg, #1f1b2a 0, #231c2b 22%, #3a2330 34%, #43363a 50%, #3f2a28 62%, #3b1c1b 75%, #2c1818 100%);
  font-size: 14px;
}

.outer .apps button {
  width: 62px;
}

.outer .apps button:first-child {
  width: 61px;
}

.outer .run::after {
  content: "";
  position: absolute;
  left: 5px;
  right: 6px;
  bottom: 0;
  height: 3px;
  background: #b5b3f0;
}

.count {
  position: absolute;
  right: 13px;
  bottom: 8px;
  padding: 0 2px;
  border-radius: 4px;
  background: #858585;
  font-size: 10px;
  line-height: 14px;
}

.s15 { width: 15px; height: 15px; }
.s20 { width: 20px; height: 20px; }
.s22 { width: 22px; height: 22px; }
.s28 { width: 28px; height: 28px; }
.s30 { width: 30px; height: 30px; }

.t12 { width: 12px; height: 12px; margin: 0 5px; }
.t15 { width: 16px; height: 14px; margin: 0 3px; }
.t16 { width: 16px; height: 16px; margin: 0 7px; }
.t18 { width: 20px; height: 18px; margin: 0 5px; }
.t20 { width: 20px; height: 20px; margin: 0 5px; }

.tray time {
  text-align: center;
}

.inner .lang {
  width: 34px;
  text-align: center;
}

.inner time {
  width: 60px;
  line-height: 16px;
}

.outer .lang {
  width: 44px;
  text-align: center;
}

.outer time {
  width: 88px;
  line-height: 23px;
}

.notify {
  position: relative;
  border-right: 1px solid #777;
}

.notify span {
  position: absolute;
  border: 1px solid #999;
  border-radius: 50%;
  background: #333;
  font-weight: 600;
  text-align: center;
}

.inner .notify {
  width: 44px;
  height: 36px;
  margin-right: 4px;
  padding-right: 10px;
}

.inner .notify svg {
  width: 14px;
  height: 13px;
}

.inner .notify span {
  right: 9px;
  bottom: 3px;
  width: 17px;
  height: 16px;
  font-size: 10px;
  line-height: 14px;
}

.outer .notify {
  width: 61px;
  height: 50px;
  margin-right: 5px;
  padding-right: 10px;
}

.outer .notify svg {
  width: 20px;
  height: 18px;
}

.outer .notify span {
  right: 15px;
  bottom: 5px;
  width: 20px;
  height: 20px;
  font-size: 12px;
  line-height: 18px;
}

.pointer {
  position: absolute;
  left: 897px;
  bottom: 0;
}
```
